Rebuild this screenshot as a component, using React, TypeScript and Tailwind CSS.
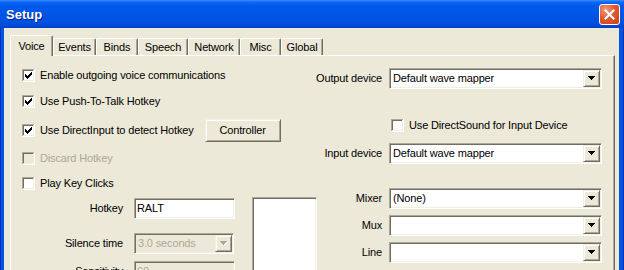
import React from 'react';

// classic 3D edges on the XP beige scheme
const sunken =
  'border border-t-[#ACA899] border-l-[#ACA899] border-b-white border-r-white shadow-[inset_1px_1px_0_#716F64,inset_-1px_-1px_0_#F1EFE2]';
const raised =
  'border border-t-[#F1EFE2] border-l-[#F1EFE2] border-b-[#716F64] border-r-[#716F64] shadow-[inset_1px_1px_0_#FFFFFF,inset_-1px_-1px_0_#ACA899]';

const CheckBox: React.FC<{ checked?: boolean; disabled?: boolean }> = ({ checked, disabled }) => (
  <svg width="13" height="13" viewBox="0 0 13 13" shapeRendering="crispEdges" className="shrink-0">
    <rect width="13" height="13" fill="#FFFFFF" />
    <path d="M0 0h12v1H1v11H0z" fill="#ACA899" />
    <path d="M1 11h11v1H1zM11 1h1v10h-1z" fill="#F1EFE2" />
    <path d="M1 1h10v1H2v9H1z" fill="#716F64" />
    <rect x="2" y="2" width="9" height="9" fill={disabled ? '#ECE9D8' : '#FFFFFF'} />
    {checked && (
      <path
        d="M9 3h1v1H9zM8 4h2v1H8zM3 5h1v1H3zM7 5h3v1H7zM3 6h2v1H3zM6 6h3v1H6zM3 7h5v1H3zM4 8h3v1H4zM5 9h1v1H5z"
        fill="#000000"
      />
    )}
  </svg>
);

const CheckRow: React.FC<{ label: string; checked?: boolean; disabled?: boolean; className?: string }> = ({
  label,
  checked,
  disabled,
  className = '',
}) => (
  <div className={`flex items-center h-[20px] shrink-0 ${className}`}>
    <CheckBox checked={checked} disabled={disabled} />
    <span className={`ml-[5px] whitespace-nowrap ${disabled ? 'text-[#ACA899]' : ''}`}>{label}</span>
  </div>
);

const Arrow: React.FC<{ disabled?: boolean }> = ({ disabled }) => (
  <svg width="8" height="5" viewBox="0 0 8 5" shapeRendering="crispEdges">
    {disabled && <path d="M1 1h7v1H1zM2 2h5v1H2zM3 3h3v1H3zM4 4h1v1H4z" fill="#FFFFFF" />}
    <path d="M0 0h7v1H0zM1 1h5v1H1zM2 2h3v1H2zM3 3h1v1H3z" fill={disabled ? '#ACA899' : '#000000'} />
  </svg>
);

const Select: React.FC<{ value?: string; disabled?: boolean; width?: string }> = ({
  value = '',
  disabled,
  width = 'w-[213px]',
}) => (
  <div className={`${width} h-[21px] shrink-0 flex p-[1px] ${sunken} ${disabled ? 'bg-[#ECE9D8]' : 'bg-white'}`}>
    <span className={`flex-1 pl-[2px] leading-[17px] whitespace-nowrap overflow-hidden ${disabled ? 'text-[#ACA899]' : ''}`}>
      {value}
    </span>
    <div className={`w-[17px] h-[17px] flex items-center justify-center bg-[#ECE9D8] ${raised}`}>
      <Arrow disabled={disabled} />
    </div>
  </div>
);

const TextBox: React.FC<{ value: string; disabled?: boolean }> = ({ value, disabled }) => (
  <div
    className={`w-[101px] h-[21px] shrink-0 pl-[2px] leading-[19px] ${sunken} ${
      disabled ? 'bg-[#ECE9D8] text-[#ACA899]' : 'bg-white'
    }`}
  >
    {value}
  </div>
);

const LabeledSelect: React.FC<{ label: string; value?: string; className?: string }> = ({ label, value, className = '' }) => (
  <div className={`flex items-center h-[21px] shrink-0 ${className}`}>
    <span className="w-[70px] text-right whitespace-nowrap">{label}</span>
    <div className="ml-[7px]">
      <Select value={value} />
    </div>
  </div>
);

const tabs = [
  { name: 'Events', w: 'w-[43px]' },
  { name: 'Binds', w: 'w-[42px]' },
  { name: 'Speech', w: 'w-[50px]' },
  { name: 'Network', w: 'w-[52px]' },
  { name: 'Misc', w: 'w-[41px]' },
  { name: 'Global', w: 'w-[42px]' },
];

export default function App() {
  return (
    <div className="w-[624px] h-[270px] overflow-hidden flex flex-col font-['Liberation_Sans',Arial,sans-serif] text-[11px] tracking-[-0.15px] text-black">
      {/* Title bar */}
      <div className="h-[28px] shrink-0 flex items-center justify-between pl-[6px] pr-[4px] bg-[linear-gradient(180deg,#3A8CFF_0%,#0A66F4_8%,#0058EE_22%,#0054E4_60%,#0050DE_85%,#0040C6_100%)]">
        <span className="text-white font-bold text-[13px] tracking-normal pt-[1px] [text-shadow:1px_1px_0_#0A1E8C]">Setup</span>
        <div className="w-[21px] h-[21px] rounded-[3px] border border-white bg-[radial-gradient(circle_at_30%_25%,#F29A7A_0%,#E2592F_45%,#C8401A_100%)] flex items-center justify-center">
          <svg width="11" height="11" viewBox="0 0 11 11">
            <path d="M1.5 1.5l8 8M9.5 1.5l-8 8" stroke="#FFFFFF" strokeWidth="2.1" strokeLinecap="square" />
          </svg>
        </div>
      </div>

      {/* Window body */}
      <div className="flex-1 min-h-0 flex">
        <div className="w-[4px] shrink-0 bg-[#0553E3] border-l border-l-[#0032B4]" />
        <div className="flex-1 min-h-0 flex flex-col bg-[#ECE9D8] pl-[6px] pr-[4px]">
          {/* Tab strip */}
          <div className="h-[27px] shrink-0 flex items-end">
            <div className="relative z-10 w-[43px] h-[21px] -mb-px flex items-center justify-center bg-[#ECE9D8] border-l border-t border-l-white border-t-white border-r border-r-[#716F64] rounded-t-[2px] shadow-[inset_-1px_0_0_#ACA899]">
              Voice
            </div>
            {tabs.map((t) => (
              <div
                key={t.name}
                className={`${t.w} h-[17px] flex items-center justify-center pt-[1px] border-l border-t border-l-white border-t-white border-r border-r-[#716F64] rounded-t-[2px] shadow-[inset_-1px_0_0_#ACA899]`}
              >
                {t.name}
              </div>
            ))}
          </div>

          {/* Panel */}
          <div className="flex-1 min-h-0 overflow-hidden flex items-start justify-between border-t border-l border-t-white border-l-white border-r border-r-[#716F64] shadow-[inset_-1px_0_0_#ACA899] pl-[11px] pr-[12px]">
            {/* Left column */}
            <div className="w-[290px] shrink-0 flex flex-col pt-[9px]">
              <CheckRow label="Enable outgoing voice communications" checked />
              <CheckRow label="Use Push-To-Talk Hotkey" checked className="mt-[6px]" />
              <div className="flex items-center h-[23px] shrink-0 mt-[8px]">
                <CheckBox checked />
                <span className="ml-[5px] whitespace-nowrap">Use DirectInput to detect Hotkey</span>
                <button
                  className={`ml-[11px] w-[76px] h-[23px] bg-[#ECE9D8] ${raised} flex items-center justify-center`}
                >
                  Controller
                </button>
              </div>
              <CheckRow label="Discard Hotkey" disabled className="mt-[6px]" />
              <CheckRow label="Play Key Clicks" className="mt-[5px]" />

              <div className="mt-[4px] flex shrink-0">
                <div className="w-[213px] shrink-0 flex flex-col pt-[1px]">
                  <div className="flex items-center h-[21px] shrink-0">
                    <span className="w-[101px] text-right">Hotkey</span>
                    <div className="ml-[11px]">
                      <TextBox value="RALT" />
                    </div>
                  </div>
                  <div className="flex items-center h-[21px] shrink-0 mt-[14px]">
                    <span className="w-[101px] text-right">Silence time</span>
                    <div className="ml-[11px]">
                      <Select value="3.0 seconds" disabled width="w-[100px]" />
                    </div>
                  </div>
                  <div className="flex items-center h-[21px] shrink-0 mt-[7px]">
                    <span className="w-[101px] text-right">Sensitivity</span>
                    <div className="ml-[11px]">
                      <TextBox value="60" disabled />
                    </div>
                  </div>
                </div>
                <div className={`ml-[17px] w-[65px] h-[90px] shrink-0 bg-white ${sunken}`} />
              </div>
            </div>

            {/* Right column */}
            <div className="w-[290px] shrink-0 flex flex-col pt-[12px]">
              <LabeledSelect label="Output device" value="Default wave mapper" />
              <div className="flex items-center h-[20px] shrink-0 mt-[26px] pl-[79px]">
                <CheckBox />
                <span className="ml-[5px] whitespace-nowrap">Use DirectSound for Input Device</span>
              </div>
              <LabeledSelect label="Input device" value="Default wave mapper" className="mt-[8px]" />
              <LabeledSelect label="Mixer" value="(None)" className="mt-[24px]" />
              <LabeledSelect label="Mux" className="mt-[6px]" />
              <LabeledSelect label="Line" className="mt-[6px]" />
            </div>
          </div>
        </div>
        <div className="w-[5px] shrink-0 bg-[#0553E3] border-r border-r-[#0032B4]" />
      </div>
    </div>
  );
}
